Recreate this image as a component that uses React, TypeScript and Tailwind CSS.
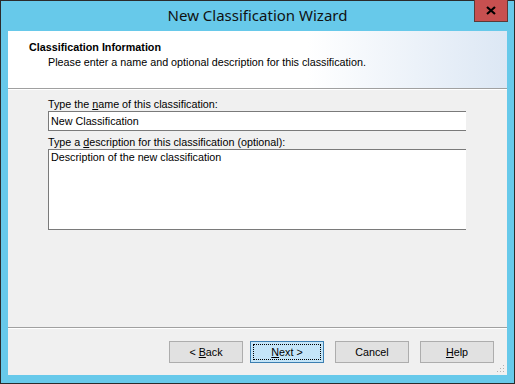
import React from "react";

const ui = { fontFamily: '"Liberation Sans", Arial, sans-serif' };

function WizardButton({
  label,
  focused,
}: {
  label: React.ReactNode;
  focused?: boolean;
}) {
  return (
    <button
      className={
        "relative flex h-[22px] w-[74px] items-center justify-center border text-[10.75px] text-black " +
        (focused ? "border-[#3c7fb1] bg-[#c4e5f8]" : "border-[#adadad] bg-[#e1e1e1]")
      }
      style={ui}
    >
      {focused ? (
        <span className="absolute inset-[2px] border border-dotted border-black" />
      ) : null}
      <span className="relative">{label}</span>
    </button>
  );
}

export default function App() {
  return (
    <div className="h-[384px] w-[515px] border border-[#2b2b2b] bg-[#67c9ea]">
      {/* title bar */}
      <div className="relative flex h-[30px] items-center justify-center">
        <span
          className="text-[15px] text-[#111] pb-[1px]"
          style={{ fontFamily: '"Noto Sans", "Open Sans", sans-serif' }}
        >
          New Classification Wizard
        </span>
        <div className="absolute right-[6px] top-[-1px] flex h-[22px] w-[34px] items-center justify-center border border-[#5a3a38] border-t-0 bg-[#c75050]">
          <svg width="10" height="9" viewBox="0 0 10 9">
            <path d="M1 1 L9 8 M9 1 L1 8" stroke="#000" strokeWidth="2.2" />
          </svg>
        </div>
      </div>

      {/* client area */}
      <div className="mx-[7px] flex h-[344px] flex-col bg-[#f0f0f0]" style={ui}>
        <div className="h-[58px] border-b border-[#a0a0a0] bg-gradient-to-r from-white from-60% to-[#dce7f4] pl-[21px] pt-[9px]">
          <div className="text-[10.75px] font-bold leading-[14px] text-black">Classification Information</div>
          <div className="pl-[19px] text-[10.75px] leading-[16px] text-black">
            Please enter a name and optional description for this classification.
          </div>
        </div>
        <div className="h-px bg-white" />

        <div className="flex flex-1 flex-col pl-[40px] pr-[41px] pt-[8px]">
          <div className="text-[10.75px] leading-[13px] text-black">
            Type the <span className="underline">n</span>ame of this classification:
          </div>
          <div className="flex h-[20px] items-center border-y border-l border-[#7a7a7a] bg-white pl-[2px] text-[10.75px] text-black">
            New Classification
          </div>
          <div className="mt-[5px] text-[10.75px] leading-[13px] text-black">
            Type a <span className="underline">d</span>escription for this classification (optional):
          </div>
          <div className="h-[81px] border-y border-l border-[#7a7a7a] bg-white pl-[2px] pt-[1px] text-[10.75px] leading-[13px] text-black">
            Description of the new classification
          </div>
        </div>

        <div className="h-px bg-[#a0a0a0]" />
        <div className="h-px bg-white" />
        <div className="relative flex h-[46px] items-start pl-[161px] pt-[12px]">
          <WizardButton label={<>&lt; <span className="underline">B</span>ack</>} />
          <div className="w-[7px]" />
          <WizardButton focused label={<><span className="underline">N</span>ext &gt;</>} />
          <div className="w-[11px]" />
          <WizardButton label="Cancel" />
          <div className="w-[11px]" />
          <WizardButton label={<><span className="underline">H</span>elp</>} />
          <svg className="absolute bottom-[2px] right-[2px]" width="10" height="10" viewBox="0 0 10 10">
            {[
              [8, 2],
              [5, 5],
              [8, 5],
              [2, 8],
              [5, 8],
              [8, 8],
            ].map(([x, y]) => (
              <rect key={`${x}-${y}`} x={x} y={y} width="1" height="1" fill="#b0b0b0" />
            ))}
          </svg>
        </div>
      </div>
    </div>
  );
}
